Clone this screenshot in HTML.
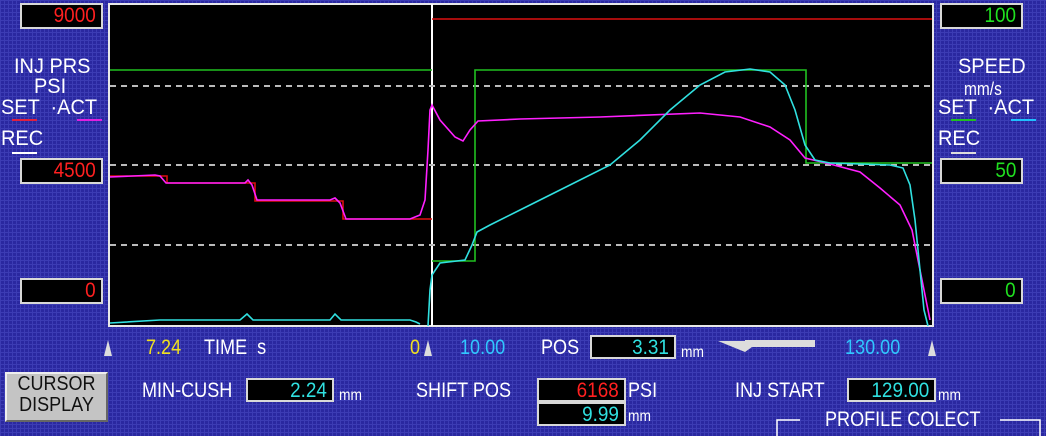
<!DOCTYPE html>
<html><head><style>
body{margin:0;width:1046px;height:436px;overflow:hidden;position:relative;font-family:"Liberation Sans",sans-serif;
background-color:#2a28a0;
background-image:linear-gradient(90deg,#3c3cb4 1px,transparent 1px),linear-gradient(#3c3cb4 1px,transparent 1px);
background-size:4px 4px;}
.t{position:absolute;color:#fff;font-size:21px;line-height:22px;white-space:nowrap;transform-origin:0 0;transform:scaleX(.86)}
.b{position:absolute;background:#000;border:2px solid #d8d8d8;box-sizing:border-box;text-align:right;font-size:21px;line-height:21px;padding-right:5px}
.b span{display:inline-block;transform:scaleX(.9);transform-origin:100% 0}
.r{color:#ff2020}.g{color:#20e020}.c{color:#30e0e0}.y{color:#f0e020}.cb{color:#30c8ff}
</style></head><body>
<svg width="1046" height="436" style="position:absolute;left:0;top:0">
<rect x="109" y="4" width="824" height="322" fill="#000" stroke="#e8e8e8" stroke-width="2"/>
<line x1="432" y1="4" x2="432" y2="326" stroke="#fff" stroke-width="2"/>
<g stroke="#bbb" stroke-width="2" stroke-dasharray="6,5">
<line x1="110" y1="86" x2="932" y2="86"/><line x1="110" y1="165" x2="932" y2="165"/><line x1="110" y1="245" x2="932" y2="245"/></g>
<g fill="none" stroke-width="1.6">
<polyline stroke="#dd1010" points="110,176 167,176 167,183 255,183 255,201 343,201 343,219 432,219"/>
<line x1="432" y1="19" x2="932" y2="19" stroke="#dd1010"/>
<polyline stroke="#20c020" points="110,70 432,70"/>
<polyline stroke="#20c020" points="432,261 475,261 475,70 806,70 806,163 932,163"/>
<polyline stroke="#ff20ff" points="110,177 155,175 160,176 166,183 245,183 248,180 252,185 257,200 330,200 335,198 340,203 346,219 410,219 420,215 425,200 428,150 430,110 432,105 440,120 455,137 463,141 470,130 478,121 520,119 600,117 700,113 740,117 770,127 790,140 805,158 830,164 860,172 880,188 900,205 912,230 920,270 926,300 930,320"/>
<polyline stroke="#30e0e0" points="110,323 160,320 240,320 247,314 253,320 330,320 335,314 341,320 410,320 416,322 420,324 "/>
<polyline stroke="#30e0e0" points="428,326 430,290 432,275 440,263 465,260 472,245 477,232 490,225 520,210 560,190 610,165 640,140 670,110 700,85 725,72 750,69 770,72 785,85 795,110 805,145 815,160 830,163 890,165 903,168 910,185 915,220 920,270 924,310 928,326"/>
</g>
<g fill="#ddd"><polygon points="104,356 108,340 112,356"/><polygon points="424,356 428,340 432,356"/><polygon points="928,356 932,340 936,356"/>
<polygon points="718,341 745,341 745,340 815,340 815,347 752,347 745,352"/></g>
<g stroke="#fff" stroke-width="1.5" fill="none"><polyline points="777,436 777,420 800,420"/><polyline points="1000,420 1040,420 1040,436"/></g>
<g stroke-width="2"><line x1="12" y1="120" x2="37" y2="120" stroke="#e02040"/><line x1="77" y1="120" x2="102" y2="120" stroke="#e020e0"/><line x1="12" y1="153" x2="37" y2="153" stroke="#fff"/>
<line x1="951" y1="120" x2="976" y2="120" stroke="#20c020"/><line x1="1011" y1="120" x2="1036" y2="120" stroke="#20c0ff"/><line x1="951" y1="153" x2="976" y2="153" stroke="#ddd"/></g>
</svg>
<div class="b r" style="left:20px;top:3px;width:83px;height:26px"><span>9000</span></div>
<div class="b r" style="left:20px;top:158px;width:83px;height:26px"><span>4500</span></div>
<div class="b r" style="left:20px;top:278px;width:83px;height:26px"><span>0</span></div>
<div class="b g" style="left:940px;top:3px;width:83px;height:26px"><span>100</span></div>
<div class="b g" style="left:940px;top:158px;width:83px;height:26px"><span>50</span></div>
<div class="b g" style="left:940px;top:278px;width:83px;height:26px"><span>0</span></div>
<div class="t" style="left:14px;top:56px;transform:scaleX(.95)">INJ PRS</div>
<div class="t" style="left:34px;top:76px;transform:scaleX(.95)">PSI</div>
<div class="t" style="left:1px;top:97px;transform:scaleX(.95)">SET &nbsp;·ACT</div>
<div class="t" style="left:1px;top:128px;transform:scaleX(.95)">REC</div>
<div class="t" style="left:958px;top:56px;transform:scaleX(.95)">SPEED</div>
<div class="t" style="left:964px;top:78px;font-size:18px">mm/s</div>
<div class="t" style="left:938px;top:97px;transform:scaleX(.95)">SET &nbsp;·ACT</div>
<div class="t" style="left:938px;top:128px;transform:scaleX(.95)">REC</div>
<div class="t y" style="left:146px;top:337px">7.24</div>
<div class="t" style="left:204px;top:337px">TIME &nbsp;s</div>
<div class="t y" style="left:410px;top:337px">0</div>
<div class="t cb" style="left:460px;top:337px">10.00</div>
<div class="t" style="left:541px;top:337px">POS</div>
<div class="b c" style="left:590px;top:335px;width:86px;height:24px"><span>3.31</span></div>
<div class="t" style="left:681px;top:342px;font-size:16px">mm</div>
<div class="t cb" style="left:845px;top:337px">130.00</div>
<div style="position:absolute;left:5px;top:372px;width:103px;height:50px;background:#c4c4c4;border:2px solid #eee;border-right-color:#666;border-bottom-color:#666;box-sizing:border-box;font-size:20px;line-height:21px;text-align:center;color:#111"><div style="transform:scaleX(.9)">CURSOR<br>DISPLAY</div></div>
<div class="t" style="left:142px;top:380px">MIN-CUSH</div>
<div class="b c" style="left:246px;top:378px;width:88px;height:24px"><span>2.24</span></div>
<div class="t" style="left:339px;top:385px;font-size:16px">mm</div>
<div class="t" style="left:416px;top:380px">SHIFT POS</div>
<div class="b r" style="left:537px;top:378px;width:89px;height:24px"><span>6168</span></div>
<div class="b c" style="left:537px;top:402px;width:89px;height:24px"><span>9.99</span></div>
<div class="t" style="left:628px;top:380px">PSI</div>
<div class="t" style="left:628px;top:406px;font-size:16px">mm</div>
<div class="t" style="left:735px;top:380px">INJ START</div>
<div class="b c" style="left:847px;top:378px;width:89px;height:24px"><span>129.00</span></div>
<div class="t" style="left:938px;top:385px;font-size:16px">mm</div>
<div class="t" style="left:825px;top:409px">PROFILE COLECT</div>
</body></html>
